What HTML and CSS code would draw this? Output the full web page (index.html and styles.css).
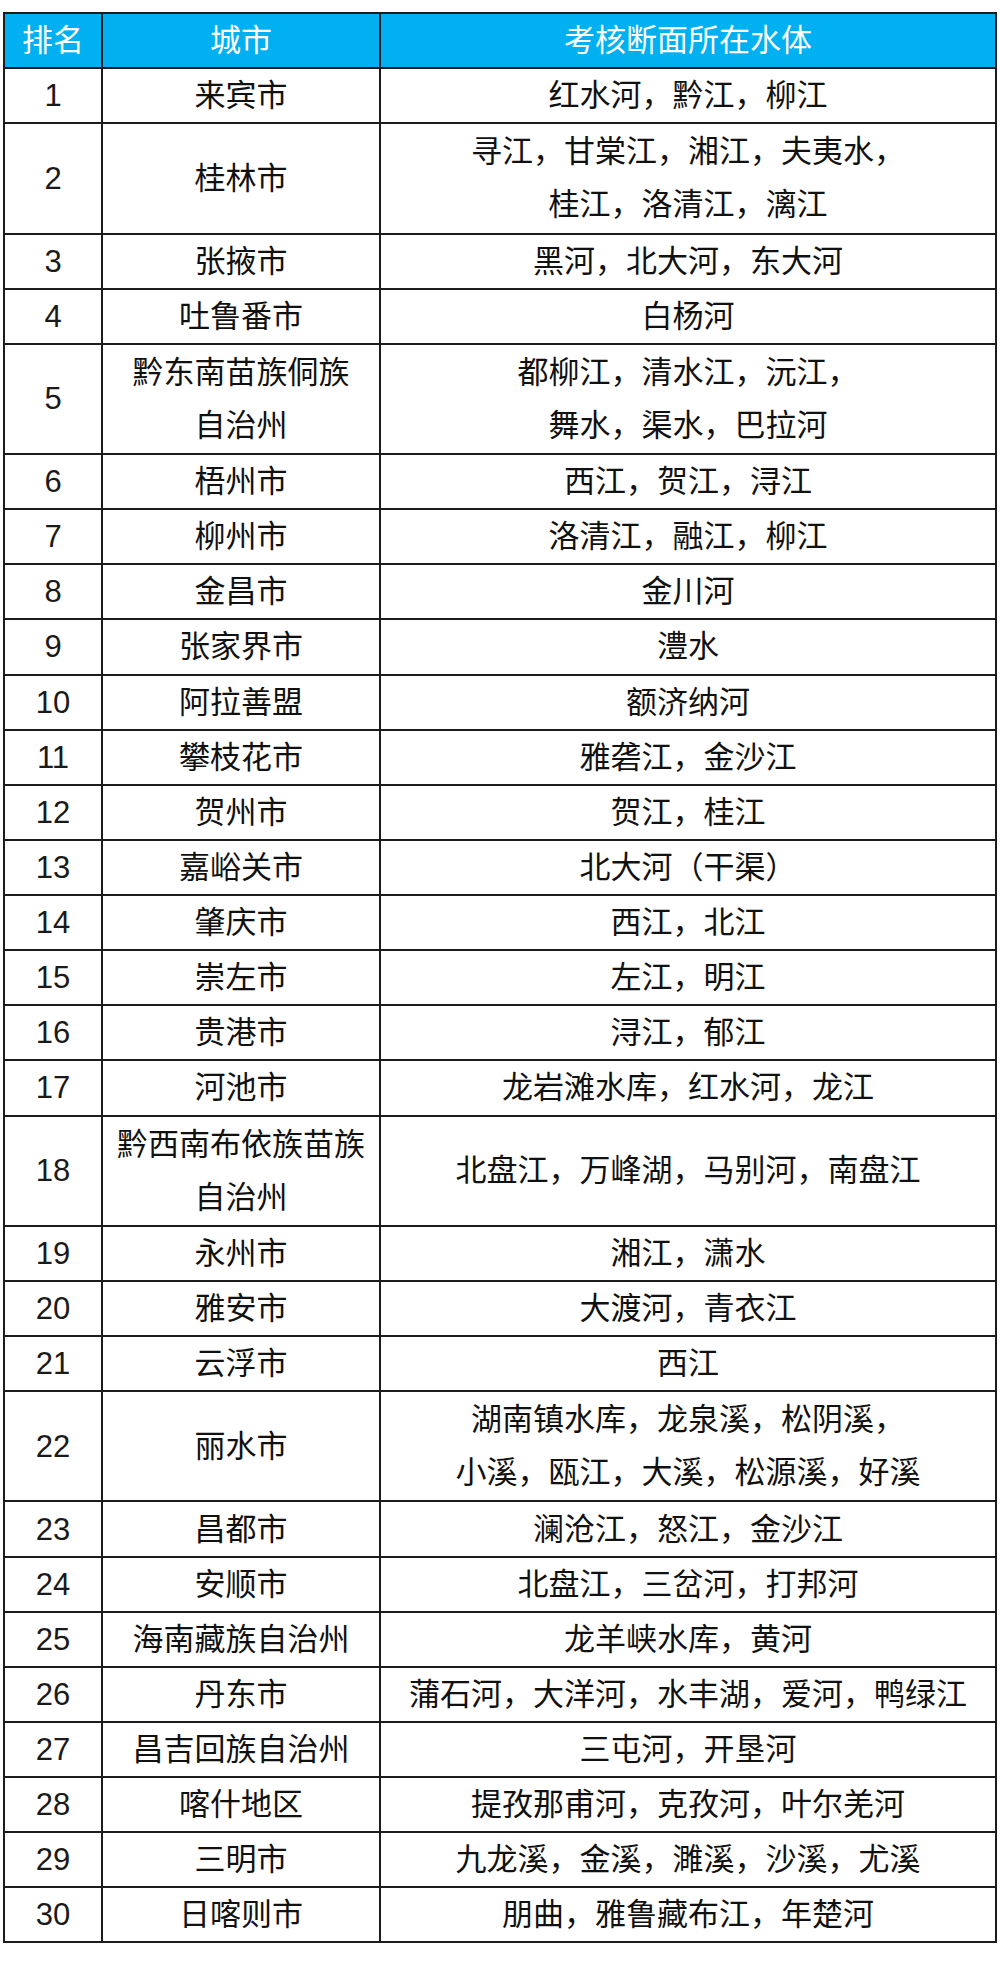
FILE: index.html
```html
<!DOCTYPE html>
<html lang="zh-CN">
<head>
<meta charset="utf-8">
<title>考核断面所在水体</title>
<link rel="stylesheet" href="styles.css">
</head>
<body>
<table class="rank">
  <colgroup>
    <col class="c-rank">
    <col class="c-city">
    <col class="c-water">
  </colgroup>
  <thead>
    <tr class="s head"><th>排名</th><th>城市</th><th>考核断面所在水体</th></tr>
  </thead>
  <tbody>
    <tr class="s"><td class="num">1</td><td>来宾市</td><td>红水河，黔江，柳江</td></tr>
    <tr class="d"><td class="num">2</td><td>桂林市</td><td>寻江，甘棠江，湘江，夫夷水，<br>桂江，洛清江，漓江</td></tr>
    <tr class="s"><td class="num">3</td><td>张掖市</td><td>黑河，北大河，东大河</td></tr>
    <tr class="s"><td class="num">4</td><td>吐鲁番市</td><td>白杨河</td></tr>
    <tr class="d"><td class="num">5</td><td>黔东南苗族侗族<br>自治州</td><td>都柳江，清水江，沅江，<br>舞水，渠水，巴拉河</td></tr>
    <tr class="s"><td class="num">6</td><td>梧州市</td><td>西江，贺江，浔江</td></tr>
    <tr class="s"><td class="num">7</td><td>柳州市</td><td>洛清江，融江，柳江</td></tr>
    <tr class="s"><td class="num">8</td><td>金昌市</td><td>金川河</td></tr>
    <tr class="s"><td class="num">9</td><td>张家界市</td><td>澧水</td></tr>
    <tr class="s"><td class="num">10</td><td>阿拉善盟</td><td>额济纳河</td></tr>
    <tr class="s"><td class="num">11</td><td>攀枝花市</td><td>雅砻江，金沙江</td></tr>
    <tr class="s"><td class="num">12</td><td>贺州市</td><td>贺江，桂江</td></tr>
    <tr class="s"><td class="num">13</td><td>嘉峪关市</td><td>北大河（干渠）</td></tr>
    <tr class="s"><td class="num">14</td><td>肇庆市</td><td>西江，北江</td></tr>
    <tr class="s"><td class="num">15</td><td>崇左市</td><td>左江，明江</td></tr>
    <tr class="s"><td class="num">16</td><td>贵港市</td><td>浔江，郁江</td></tr>
    <tr class="s"><td class="num">17</td><td>河池市</td><td>龙岩滩水库，红水河，龙江</td></tr>
    <tr class="d"><td class="num">18</td><td>黔西南布依族苗族<br>自治州</td><td>北盘江，万峰湖，马别河，南盘江</td></tr>
    <tr class="s"><td class="num">19</td><td>永州市</td><td>湘江，潇水</td></tr>
    <tr class="s"><td class="num">20</td><td>雅安市</td><td>大渡河，青衣江</td></tr>
    <tr class="s"><td class="num">21</td><td>云浮市</td><td>西江</td></tr>
    <tr class="d"><td class="num">22</td><td>丽水市</td><td>湖南镇水库，龙泉溪，松阴溪，<br>小溪，瓯江，大溪，松源溪，好溪</td></tr>
    <tr class="s"><td class="num">23</td><td>昌都市</td><td>澜沧江，怒江，金沙江</td></tr>
    <tr class="s"><td class="num">24</td><td>安顺市</td><td>北盘江，三岔河，打邦河</td></tr>
    <tr class="s"><td class="num">25</td><td>海南藏族自治州</td><td>龙羊峡水库，黄河</td></tr>
    <tr class="s"><td class="num">26</td><td>丹东市</td><td>蒲石河，大洋河，水丰湖，爱河，鸭绿江</td></tr>
    <tr class="s"><td class="num">27</td><td>昌吉回族自治州</td><td>三屯河，开垦河</td></tr>
    <tr class="s"><td class="num">28</td><td>喀什地区</td><td>提孜那甫河，克孜河，叶尔羌河</td></tr>
    <tr class="s"><td class="num">29</td><td>三明市</td><td>九龙溪，金溪，濉溪，沙溪，尤溪</td></tr>
    <tr class="s"><td class="num">30</td><td>日喀则市</td><td>朋曲，雅鲁藏布江，年楚河</td></tr>
  </tbody>
</table>
</body>
</html>
```

FILE: styles.css
```css
html, body {
  margin: 0;
  padding: 0;
  background: #ffffff;
}

body {
  padding: 12px 0 0 3px;
  font-family: "Liberation Sans", "Noto Sans CJK SC", sans-serif;
  color: #111111;
}

.rank {
  border-collapse: collapse;
  table-layout: fixed;
  width: 992px;
  border: 2px solid #1c1c1c;
}

.c-rank { width: 98px; }
.c-city { width: 278px; }
.c-water { width: 616px; }

.rank th,
.rank td {
  border: 2px solid #1c1c1c;
  padding: 0;
  text-align: center;
  vertical-align: middle;
  font-size: 31px;
  font-weight: 400;
  line-height: 1;
  white-space: nowrap;
}

.rank th {
  background: #00b0f0;
  color: #ffffff;
}

.rank tr.s { height: 55.14px; }
.rank tr.d { height: 110.28px; }

.rank tr.d td { line-height: 53px; }

.rank td.num {
  font-size: 31px;
  color: #1a1a1a;
}
```
